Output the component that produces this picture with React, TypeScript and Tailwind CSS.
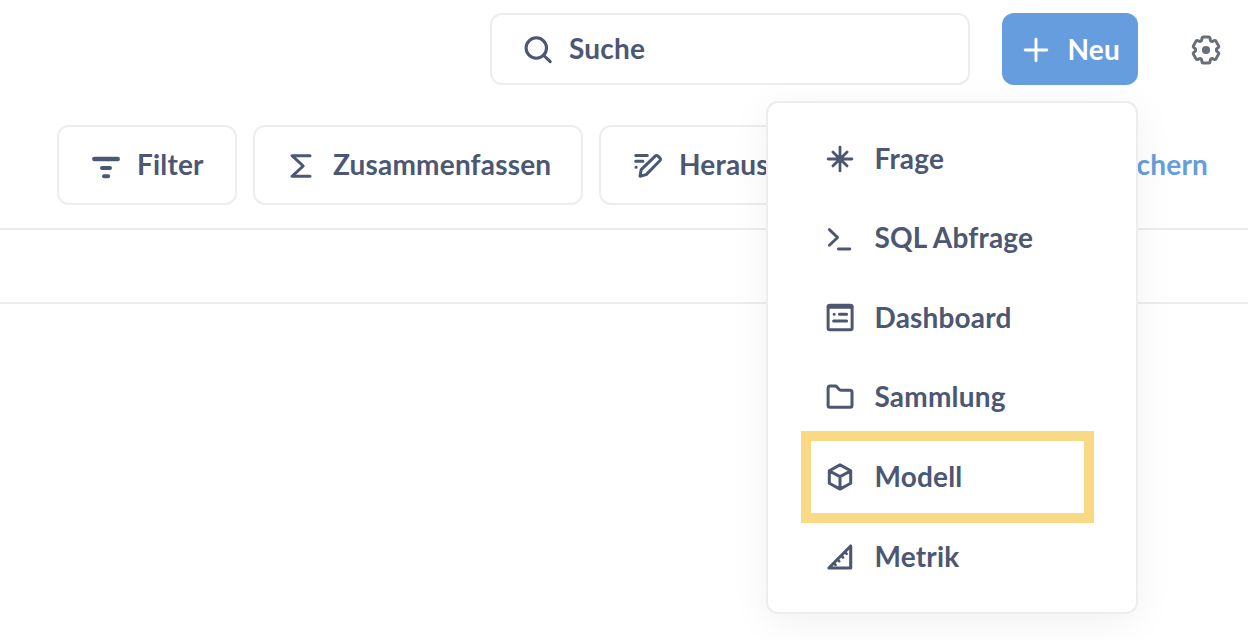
import type { ReactNode } from "react";

function Icon({ children, width = 3 }: { children: ReactNode; width?: number }) {
  return (
    <svg
      className="size-8 shrink-0"
      viewBox="0 0 32 32"
      fill="none"
      stroke="currentColor"
      strokeWidth={width}
      strokeLinecap="round"
      strokeLinejoin="round"
    >
      {children}
    </svg>
  );
}

const SearchIcon = () => (
  <Icon width={3.1}>
    <circle cx="14.3" cy="15" r="10.2" />
    <path d="M21.8 22.5 28.2 28.6" />
  </Icon>
);

const PlusIcon = () => (
  <Icon width={2.9}>
    <path d="M16 6.2v21.6M5.2 17h21.6" />
  </Icon>
);

const toothAngles = [0, 60, 120, 180, 240, 300];

const GearIcon = () => (
  <Icon width={2.9}>
    {toothAngles.map((angle) => (
      <path
        key={angle}
        transform={`translate(16 17) rotate(${angle})`}
        d="M-5.2-9Q-4.2-9.2-4.1-10.6V-11.8Q-4-13-2.8-13H2.8Q4-13 4.1-11.8V-10.6Q4.2-9.2 5.2-9"
      />
    ))}
    <circle cx="16" cy="17" r="4.1" fill="currentColor" stroke="none" />
  </Icon>
);

const FilterIcon = () => (
  <Icon width={4}>
    <path strokeWidth="4.7" d="M4.4 10h23.2" />
    <path d="M12 19h8M14 27.3h4.2" />
  </Icon>
);

const SumIcon = () => (
  <Icon>
    <path d="M25 6.7H7L18.2 17 7 27.3h18" />
  </Icon>
);

const EditorIcon = () => (
  <Icon>
    <path d="M4.7 6.4h11.6M4.7 12.3h7.2M5 18.3h.2" />
    <path d="M9 27.2l1.2-6.6L24.2 7.1q1.4-1.3 2.8 0l1.8 1.8q1.4 1.4 0 2.8L15.2 25.6z" />
  </Icon>
);

const QuestionIcon = () => (
  <Icon width={2.8}>
    <path d="M16 4.1v23.8M4.1 16h23.8M8.9 8.9l14.2 14.2M23.1 8.9 8.9 23.1" />
    <circle cx="16" cy="16" r="3.8" fill="currentColor" stroke="none" />
  </Icon>
);

const SqlIcon = () => (
  <Icon width={2.9}>
    <path d="M5.4 7.6 13.6 15.5 5.4 23.2M14.4 27h11.4" />
  </Icon>
);

const DashboardIcon = () => (
  <Icon>
    <rect x="4.1" y="3.3" width="24" height="24.4" rx="1.8" />
    <path d="M4.6 4.9h23" strokeWidth="3.8" />
    <path d="M10.1 12.2h.1M15.4 12.2h7.2M9.6 19h13" />
  </Icon>
);

const FolderIcon = () => (
  <Icon>
    <path d="M4.1 7.1q0-2 2-2h5.2q1 0 1.7.8l2.2 2.5q.6.8 1.6.8h9.2q2 0 2 2v13.2q0 1.8-1.8 1.8H5.9q-1.8 0-1.8-1.8z" />
  </Icon>
);

const ModelIcon = () => (
  <Icon>
    <path d="M16 3.9 26.7 9.8v12.4L16 28.1 5.3 22.2V9.8zM5.5 10 16 15.6 26.5 10M16 15.6V28" />
  </Icon>
);

const MetricIcon = () => (
  <Icon width={3.1}>
    <path d="M4.9 27 26.7 5v22z" />
    <path strokeWidth="2.5" d="M9.9 22.3l1.7 1.7M13.6 18.6l1.7 1.7M17.4 14.8l1.7 1.7M21 11.2l1.7 1.7" />
  </Icon>
);

const menuItems = [
  { label: "Frage", icon: <QuestionIcon /> },
  { label: "SQL Abfrage", icon: <SqlIcon /> },
  { label: "Dashboard", icon: <DashboardIcon /> },
  { label: "Sammlung", icon: <FolderIcon /> },
  { label: "Modell", icon: <ModelIcon />, highlighted: true },
  { label: "Metrik", icon: <MetricIcon /> },
];

function ToolbarButton({ icon, label, className }: { icon: ReactNode; label: string; className: string }) {
  return (
    <button
      className={`flex h-20 shrink-0 items-center rounded-xl border-2 border-[#ededed] bg-white whitespace-nowrap ${className}`}
    >
      {icon}
      <span className="pb-0.5">{label}</span>
    </button>
  );
}

export default function App() {
  return (
    <div className="relative h-[640px] w-[1248px] overflow-hidden bg-white font-['Lato',sans-serif] text-[28px] leading-9 font-bold tracking-[0.19px] text-[#4c5773]">
      <header className="flex h-[85px] items-end justify-end pr-[26px]">
        <div className="flex h-[72px] w-[480px] items-center gap-[15px] rounded-xl border-2 border-[#ededed] px-[30px]">
          <SearchIcon />
          <span className="pb-0.5">Suche</span>
        </div>
        <button className="ml-8 flex h-[72px] w-[136px] items-center gap-[15.5px] rounded-xl bg-[#669ddf] pl-[18px] text-white">
          <PlusIcon />
          <span>Neu</span>
        </button>
        <button className="ml-[52px] flex h-[72px] items-center text-[#696e7b]">
          <GearIcon />
        </button>
      </header>

      <div className="mt-10 flex h-[105px] items-start gap-4 border-b-2 border-[#ededed] pr-10 pl-[57px]">
        <ToolbarButton icon={<FilterIcon />} label="Filter" className="w-[180px] gap-[15px] pl-[31px]" />
        <ToolbarButton icon={<SumIcon />} label="Zusammenfassen" className="w-[330px] gap-4 pl-[30px]" />
        <ToolbarButton icon={<EditorIcon />} label="Herausgeber" className="w-[262px] gap-4 pl-[30px]" />
        <button className="ml-auto flex h-20 items-center pb-0.5 text-[#669ddf]">Speichern</button>
      </div>
      <div className="h-[74px] border-b-2 border-[#ededed]" />

      <ul className="absolute top-[101px] left-[766px] grid h-[513px] w-[372px] grid-rows-[79px_80px_79px_80px_80px_80px] content-start rounded-xl border-2 border-[#ededed] bg-white px-8 pt-4 shadow-[0_8px_40px_rgba(0,0,0,0.06)]">
        {menuItems.map((item) => (
          <li key={item.label} className="relative flex h-20 items-center gap-[18.5px] pl-6">
            {item.highlighted && (
              <span className="absolute top-[-6px] left-[1px] h-[92px] w-[293px] border-[10px] border-[#f9d984]" />
            )}
            {item.icon}
            <span className="pb-0.5">{item.label}</span>
          </li>
        ))}
      </ul>
    </div>
  );
}
